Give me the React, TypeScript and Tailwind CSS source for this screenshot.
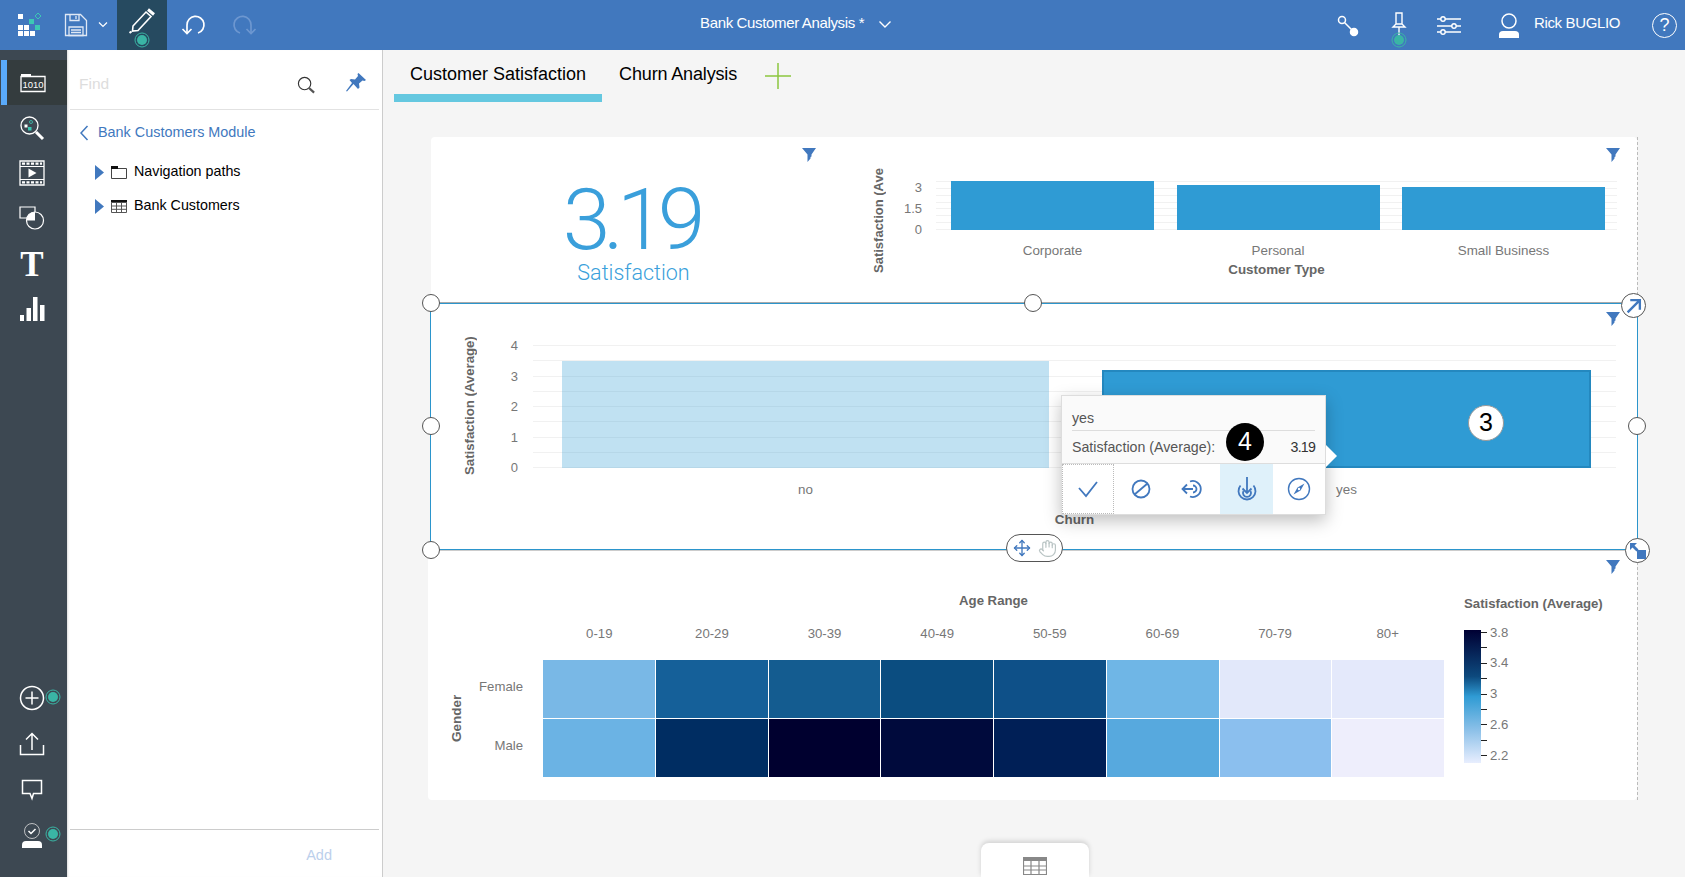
import { Move, Hand } from "lucide-react";

const font = "font-['Liberation_Sans','Arial',sans-serif]";

const female = ["bg-[#79b8e6]", "bg-[#156099]", "bg-[#145c90]", "bg-[#0b4d80]", "bg-[#0e5088]", "bg-[#6fb6e6]", "bg-[#e2e8fa]", "bg-[#e4e9fb]"];
const male = ["bg-[#6bb3e4]", "bg-[#002d62]", "bg-[#00002f]", "bg-[#000a3c]", "bg-[#001f56]", "bg-[#57a9de]", "bg-[#8bbfee]", "bg-[#eeeefc]"];
const ages = ["0-19", "20-29", "30-39", "40-49", "50-59", "60-69", "70-79", "80+"];
const legend = ["3.8", "", "3.4", "", "3", "", "2.6", "", "2.2"];

function Dot({ size = 16 }: { size?: number }) {
  return (
    <svg width={size} height={size} viewBox="0 0 16 16">
      <circle cx="8" cy="8" r="7" fill="none" stroke="#3ab5a5" strokeWidth="1" />
      <circle cx="8" cy="8" r="5" fill="#3ab5a5" />
    </svg>
  );
}

function FilterIcon() {
  return (
    <svg width="14" height="15" viewBox="0 0 14 15">
      <path d="M0 1h14L9.500 7.500v2l-1 .5v1.500L5.500 15V7.500z" fill="#4178be" />
    </svg>
  );
}

function Gridlines({ count }: { count: number }) {
  return (
    <div className="absolute inset-0 flex flex-col justify-between">
      {Array.from({ length: count }).map((_, i) => (
        <div key={i} className="h-px bg-[#f1f1f1]" />
      ))}
    </div>
  );
}

function Handle({ className }: { className: string }) {
  return <div className={`absolute h-[18px] w-[18px] rounded-full border border-[#555] bg-white ${className}`} />;
}

function SideItem({ children, active = false }: { children: React.ReactNode; active?: boolean }) {
  return (
    <div className={`relative flex h-[45px] items-center justify-center pr-[3px] ${active ? "ml-px bg-[#343c3e]" : ""}`}>
      {active && <div className="absolute inset-y-0 left-0 w-[6px] bg-[#5aaafa]" />}
      {children}
    </div>
  );
}

function TopBar() {
  return (
    <div className="flex h-[50px] shrink-0 items-center bg-[#4178be] text-white">
      <svg className="ml-[16px]" width="26" height="26" viewBox="0 0 26 26">
        <path d="M2 2h5v5H2zM2 13h5v5H2zM8 13h5v5H8zM2 19h5v5H2zM8 19h5v5H8zM14 19h5v5h-5z" fill="#fff" />
        <path d="M13 7h5v5h-5zM19 13h5v5h-5z" fill="#3cc8b4" />
        <path d="M22 1l3 3-3 3-3-3z" fill="none" stroke="#3cc8b4" />
      </svg>
      <svg className="ml-[22px]" width="24" height="24" viewBox="0 0 24 24" fill="none" stroke="#dfe8f5" strokeWidth="1.3">
        <path d="M1.500 1.500h15l6 6v15h-21z" />
        <path d="M6 1.500v6h9v-6M12 3v3" />
        <path d="M5 14h14v8.500H5zM7 17h10M7 19.500h10" />
      </svg>
      <svg className="ml-[9px]" width="12" height="8" viewBox="0 0 12 8" fill="none" stroke="#fff" strokeWidth="1.2">
        <path d="M2 1.500l4 4 4-4" />
      </svg>
      <div className="relative ml-[8px] flex h-[50px] w-[50px] items-center justify-center bg-[#264a60]">
        <svg width="26" height="28" viewBox="0 0 26 28" fill="none" stroke="#fff" strokeWidth="1.6" className="-mt-[8px]">
          <path d="M4 19L17 5l5 4.500L9 23.500l-5.500 .5z" />
          <path d="M19 2.500l6 5" strokeWidth="3" />
          <path d="M0.500 26l2-1.500" strokeWidth="2" />
        </svg>
        <div className="absolute left-[17px] top-[32px]">
          <Dot />
        </div>
      </div>
      <svg className="ml-[14px]" width="26" height="26" viewBox="0 0 26 26" fill="none" stroke="#fff" strokeWidth="1.7">
        <path d="M6 21V13A8.500 8.500 0 1 1 17 21" />
        <path d="M1.500 17L6 21.500 10.500 17" />
      </svg>
      <svg className="ml-[24px]" width="26" height="26" viewBox="0 0 26 26" fill="none" stroke="#6d97d0" strokeWidth="1.7">
        <path d="M20 21V13A8.500 8.500 0 1 0 9 21" />
        <path d="M24.500 17L20 21.500 15.500 17" />
      </svg>
      <div className="-mt-[3px] ml-[443px] w-[170px] text-[15px] tracking-[-0.35px]">Bank Customer Analysis *</div>
      <svg className="-mt-[2px] ml-[8px]" width="14" height="9" viewBox="0 0 14 9" fill="none" stroke="#fff" strokeWidth="1.4">
        <path d="M1.500 1.500L7 7l5.500-5.500" />
      </svg>
      <svg className="ml-[444px]" width="24" height="24" viewBox="0 0 24 24" fill="none" stroke="#fff" strokeWidth="1.5">
        <circle cx="6" cy="7" r="3.500" />
        <path d="M8.500 9.500l7 7" />
        <circle cx="18" cy="19" r="3.500" fill="#fff" />
      </svg>
      <div className="relative ml-[27px] h-[50px] w-[24px]">
        <svg className="absolute left-0 top-[10px]" width="24" height="26" viewBox="0 0 24 26" fill="none" stroke="#fff" strokeWidth="1.4">
          <path d="M9 3h6v11H9zM9 14l-3 3h12l-3-3M12 17v9" />
        </svg>
        <div className="absolute left-[4px] top-[32px]">
          <Dot />
        </div>
      </div>
      <svg className="ml-[25px]" width="26" height="22" viewBox="0 0 26 22" fill="none" stroke="#fff" strokeWidth="1.4">
        <path d="M1 5h24M1 12h24M1 18h24" />
        <circle cx="7" cy="5" r="2.200" fill="#4178be" />
        <circle cx="18" cy="12" r="2.200" fill="#4178be" />
        <circle cx="7" cy="18" r="2.200" fill="#4178be" />
      </svg>
      <svg className="ml-[35px]" width="24" height="26" viewBox="0 0 24 26" fill="none">
        <circle cx="12" cy="9" r="7" stroke="#fff" strokeWidth="1.500" />
        <path d="M2 26v-3.500Q2 19 6 19h12q4 0 4 3.500V26z" fill="#fff" />
      </svg>
      <div className="-mt-[3px] ml-[13px] w-[86px] whitespace-nowrap text-[15px] tracking-[-0.35px]">Rick BUGLIO</div>
      <div className="ml-[32px] flex h-[25px] w-[25px] items-center justify-center rounded-full border-[1.5px] border-white text-[18px]">?</div>
    </div>
  );
}

function Sidebar() {
  return (
    <div className="flex w-[67px] shrink-0 flex-col justify-between bg-[#3d4852] pb-[20px] pt-[10px]">
      <div>
        <SideItem active>
          <svg className="ml-[1px]" width="26" height="20" viewBox="0 0 26 20" fill="none">
            <path d="M1 1h10v3H1z" fill="#fff" />
            <path d="M1 3.500h24v15H1z" stroke="#fff" strokeWidth="1.300" />
            <text x="13" y="15" textAnchor="middle" fontSize="9.500" fill="#fff" fontFamily="Liberation Sans">1010</text>
          </svg>
        </SideItem>
        <SideItem>
          <svg width="26" height="26" viewBox="0 0 26 26" fill="none" stroke="#fff">
            <circle cx="10.500" cy="10.500" r="8.500" strokeWidth="1.300" />
            <path d="M17 17l7 7" strokeWidth="3" />
            <path d="M5.500 9.500h3v3h-3z" fill="#fff" stroke="none" />
            <path d="M9 12h3.500v3.500H9z" fill="#3cc8b4" stroke="none" />
            <circle cx="12" cy="7" r="1.500" stroke="#3cc8b4" strokeWidth="0.800" />
          </svg>
        </SideItem>
        <SideItem>
          <svg width="26" height="26" viewBox="0 0 26 26" fill="none" stroke="#fff">
            <path d="M1 1h24v24H1z" strokeWidth="1.300" />
            <path d="M1 6.500h24M1 19.500h24" strokeWidth="1" />
            <path d="M3 3.700h20M3 22.300h20" strokeWidth="2.200" strokeDasharray="3 1.500" />
            <path d="M9.500 8.500v9l8-4.500z" fill="#fff" stroke="none" />
          </svg>
        </SideItem>
        <SideItem>
          <svg width="26" height="26" viewBox="0 0 26 26" fill="none" stroke="#fff" strokeWidth="1.200">
            <path d="M1 2h15v11H1z" />
            <circle cx="16" cy="15.500" r="8.500" fill="#3d4852" />
            <path d="M16 7a8.500 8.500 0 0 0-8.500 8.500H16z" fill="#fff" stroke="none" />
          </svg>
        </SideItem>
        <SideItem>
          <span className="pt-[3px] font-['Liberation_Serif',serif] text-[35px] font-bold leading-none text-white">T</span>
        </SideItem>
        <SideItem>
          <svg className="mt-[3px]" width="26" height="26" viewBox="0 0 26 26" fill="#fff">
            <path d="M1 19h4v6H1zM7.500 12H12v13H7.500zM14 1h4.500v24H14zM21 9h4.500v16H21z" />
          </svg>
        </SideItem>
      </div>
      <div>
        <SideItem>
          <svg className="-mt-[3px]" width="26" height="26" viewBox="0 0 26 26" fill="none" stroke="#fff" strokeWidth="1.500">
            <circle cx="13" cy="13" r="11.500" />
            <path d="M6.500 13h13M13 6.500v13" />
          </svg>
          <div className="absolute left-[45px] top-[12px]">
            <Dot />
          </div>
        </SideItem>
        <SideItem>
          <svg className="-mt-[1px]" width="26" height="26" viewBox="0 0 26 26" fill="none" stroke="#fff" strokeWidth="1.500">
            <path d="M1.500 14v9.500h23V14" />
            <path d="M13 19V2.500M7 8.500l6-6 6 6" />
          </svg>
        </SideItem>
        <SideItem>
          <svg className="mt-[1px]" width="22" height="22" viewBox="0 0 22 22" fill="none" stroke="#fff" strokeWidth="1.500">
            <path d="M1.500 1.500h19v13h-8l-1.500 5-2-5h-7.500z" />
          </svg>
        </SideItem>
        <SideItem>
          <svg width="22" height="26" viewBox="0 0 22 26" fill="none">
            <circle cx="11" cy="9" r="7.500" stroke="#ddd" strokeWidth="0.800" />
            <path d="M7.500 9l2.500 2.500 4.500-4.500" stroke="#fff" strokeWidth="1.500" />
            <path d="M1 26v-3Q1 19 5 19h12q4 0 4 4v3z" fill="#fff" />
          </svg>
          <div className="absolute left-[45px] top-[14px]">
            <Dot />
          </div>
        </SideItem>
      </div>
    </div>
  );
}

function Panel() {
  return (
    <div className="flex w-[316px] shrink-0 flex-col border-r border-[#ccc] bg-white shadow-[inset_2px_0_2px_-1px_#ddd]">
      <div className="mx-[3px] flex h-[60px] items-center border-b border-[#e2e2e2] pt-[8px]">
        <span className="ml-[9px] text-[15.500px] text-[#ddd]">Find</span>
        <svg className="ml-[188px] mt-[3px]" width="19" height="19" viewBox="0 0 20 20" fill="none" stroke="#333">
          <circle cx="8" cy="8" r="6.500" strokeWidth="1.200" />
          <path d="M12.500 12.500l5.500 5" strokeWidth="2.200" stroke="#555" />
        </svg>
        <svg className="ml-[30px] -mt-[1px]" width="20" height="20" viewBox="0 0 20 20" fill="#4178be">
          <path d="M12.500 0L20 7l-1.500 1-2-.5-3.500 3 .5 4L12 16 7.500 11 1 18.500l-1-.5L6 10 3.500 7 5 6l4 .5 3-3.500-.5-2z" />
        </svg>
      </div>
      <div className="flex h-[44px] items-center pl-[13px] pt-[2px] text-[14.400px] text-[#4178be]">
        <svg className="mr-[9px]" width="9" height="16" viewBox="0 0 9 16" fill="none" stroke="#4178be" strokeWidth="1.500">
          <path d="M7.500 1L1 8l6.500 7" />
        </svg>
        Bank Customers Module
      </div>
      <div className="mt-px flex h-[34px] items-center pl-[28px] text-[14.300px] text-black">
        <svg width="9" height="15" viewBox="0 0 9 15"><path d="M0 0l9 7.500L0 15z" fill="#4178be" /></svg>
        <svg className="ml-[7px]" width="16" height="13" viewBox="0 0 16 13" fill="none" stroke="#444">
          <path d="M.5 2.500h15v10H.5z" />
          <path d="M0 0h7v3H0z" fill="#111" stroke="none" />
        </svg>
        <span className="ml-[7px]">Navigation paths</span>
      </div>
      <div className="flex h-[34px] items-center pl-[28px] text-[14.300px] text-black">
        <svg width="9" height="15" viewBox="0 0 9 15"><path d="M0 0l9 7.500L0 15z" fill="#4178be" /></svg>
        <svg className="ml-[7px]" width="16" height="13" viewBox="0 0 16 13" fill="none" stroke="#555">
          <path d="M0 0h16v2.500H0z" fill="#111" stroke="none" />
          <path d="M.5 2.500h15v10H.5zM.5 6h15M.5 9.300h15M5.500 2.500v10M10.500 2.500v10" />
        </svg>
        <span className="ml-[7px]">Bank Customers</span>
      </div>
      <div className="flex-1" />
      <div className="mx-[3px] flex h-[48px] items-center justify-end border-t border-[#ccc] pr-[47px] pt-[4px] text-[14.500px] text-[#bcd0ec]">Add</div>
    </div>
  );
}

function Kpi() {
  return (
    <div className="relative flex w-[407px] shrink-0 flex-col items-center pt-[40px]">
      <div className="pr-[8px] font-['Roboto',sans-serif] text-[86px] font-light leading-[86px] tracking-[-7px] text-[#3a9fdb]">3.19</div>
      <div className="-mt-px pr-[2px] font-['Roboto',sans-serif] text-[21.500px] font-light leading-[22px] text-[#3a9fdb]">Satisfaction</div>
      <div className="absolute right-[22px] top-[10px]">
        <FilterIcon />
      </div>
    </div>
  );
}

function CustomerTypeChart() {
  return (
    <div className="ml-[33px] flex pt-[31px]">
      <div className="-mt-[4px] h-[109px] w-[16px] rotate-180 overflow-hidden whitespace-nowrap text-[13px] font-bold leading-[16px] text-[#666] [writing-mode:vertical-rl]">Satisfaction (Ave</div>
      <div className="mt-[13px] flex h-[56px] w-[35px] flex-col justify-between text-right text-[13px] leading-[14px] text-[#777]">
        <span>3</span>
        <span>1.5</span>
        <span>0</span>
      </div>
      <div className="ml-[14px] mt-[13px] w-[681px]">
        <div className="relative h-[49px]">
          <Gridlines count={8} />
          <div className="absolute inset-0 flex items-end gap-[22.500px] pl-[15px]">
            <div className="h-[49px] w-[203px] bg-[#2f9bd4]" />
            <div className="h-[45px] w-[203px] bg-[#2f9bd4]" />
            <div className="h-[43px] w-[203px] bg-[#2f9bd4]" />
          </div>
        </div>
        <div className="mt-[14px] flex gap-[22.500px] pl-[15px] text-center text-[13.400px] leading-[14px] text-[#777]">
          <span className="w-[203px]">Corporate</span>
          <span className="w-[203px]">Personal</span>
          <span className="w-[203px]">Small Business</span>
        </div>
        <div className="mt-[5px] text-center text-[13.400px] font-bold leading-[14px] text-[#666]">Customer Type</div>
      </div>
      <div className="absolute left-[1175px] top-[10px]">
        <FilterIcon />
      </div>
    </div>
  );
}

function Popup() {
  return (
    <div className="absolute left-[630px] top-[91px] h-[120px] w-[265px] border border-[#ddd] bg-[#fafafa] shadow-[0_6px_16px_rgba(0,0,0,0.25)]">
      <div className="mx-[10px] flex h-[35px] items-center border-b border-[#ddd] pt-[12px] text-[14.200px] text-[#555]">yes</div>
      <div className="flex h-[33px] items-center justify-between border-b border-[#ddd] px-[10px] pt-[2px] text-[14.200px] text-[#555]">
        <span>Satisfaction (Average):</span>
        <span className="tracking-[-0.8px] text-[#333]">3.19</span>
      </div>
      <div className="flex h-[50px] bg-white">
        <div className="flex w-[52px] items-center justify-center border border-dotted border-[#bbb]">
          <svg width="22" height="18" viewBox="0 0 22 18" fill="none" stroke="#4178be" strokeWidth="1.800">
            <path d="M2 8l7 8L20 2" />
          </svg>
        </div>
        <div className="flex w-[53px] items-center justify-center">
          <svg width="22" height="22" viewBox="0 0 22 22" fill="none" stroke="#4178be" strokeWidth="1.800">
            <circle cx="11" cy="11" r="8.500" />
            <path d="M4.500 16.500l13-11" />
          </svg>
        </div>
        <div className="flex w-[53px] items-center justify-center">
          <svg width="26" height="22" viewBox="0 0 26 22" fill="none" stroke="#4178be" strokeWidth="1.800">
            <path d="M9 3.500a8 8 0 1 1 0 15" />
            <path d="M12 7.500a3.500 3.500 0 1 1 0 7" />
            <path d="M1 11h11M6 6.500L1.500 11 6 15.500" />
          </svg>
        </div>
        <div className="flex w-[53px] items-center justify-center bg-[#dff1fa]">
          <svg width="22" height="26" viewBox="0 0 22 26" fill="none" stroke="#4178be" strokeWidth="1.800">
            <path d="M4.500 9.500a8.500 8.500 0 1 0 13 0" />
            <path d="M7.500 15a4 4 0 1 0 7 0" />
            <path d="M11 1v16M6.500 12.500L11 17l4.500-4.500" />
          </svg>
        </div>
        <div className="flex flex-1 items-center justify-center">
          <svg width="24" height="24" viewBox="0 0 24 24" fill="none" stroke="#4178be" strokeWidth="1.400">
            <circle cx="12" cy="12" r="10.500" />
            <path d="M17.500 6.500l-7 4-4 7 7-4z" fill="#4178be" stroke="none" />
            <circle cx="12" cy="12" r="1.200" fill="#fff" stroke="none" />
          </svg>
        </div>
      </div>
      <div className="absolute left-[264px] top-[49px] h-0 w-0 border-y-[11px] border-l-[11px] border-y-transparent border-l-white" />
      <div className="absolute left-[164px] top-[27px] flex h-[38px] w-[38px] items-center justify-center rounded-full bg-black text-[25px] text-white">4</div>
    </div>
  );
}

function ChurnChart() {
  return (
    <div className="relative z-10 -mr-px ml-[2px] h-[247px] border border-[#2b95cc] bg-white p-px shadow-[0_-1px_0_#aaa,0_1px_0_#ccc]">
      <div className="flex pt-[31px]">
        <div className="-mt-[3px] ml-[31px] h-[145px] w-[14px] rotate-180 whitespace-nowrap text-center text-[13.200px] font-bold leading-[14px] text-[#666] [writing-mode:vertical-rl]">Satisfaction (Average)</div>
        <div className="mt-[3px] flex h-[136px] w-[41px] flex-col justify-between text-right text-[13px] leading-[14px] text-[#777]">
          <span>4</span>
          <span>3</span>
          <span>2</span>
          <span>1</span>
          <span>0</span>
        </div>
        <div className="ml-[15px] mt-[9px] w-[1083px]">
          <div className="relative h-[123px]">
            <Gridlines count={9} />
            <div className="absolute inset-0 flex items-end gap-[53px] pl-[29px]">
              <div className="h-[107px] w-[487px] bg-[#2f9bd4]/30" />
              <div className="h-[98px] w-[489px] border-2 border-[#2488bf] bg-[#2f9bd4]" />
            </div>
          </div>
          <div className="mt-[15px] flex gap-[53px] pl-[29px] text-center text-[13.400px] leading-[14px] text-[#777]">
            <span className="w-[487px]">no</span>
            <span className="w-[489px]">yes</span>
          </div>
          <div className="mt-[16px] text-center text-[13.400px] font-bold leading-[14px] text-[#666]">Churn</div>
        </div>
      </div>

      <div className="absolute left-[1037px] top-[101px] flex h-[36px] w-[36px] items-center justify-center rounded-full border border-[#999] bg-white text-[25px] text-black">3</div>
      <Popup />

      <div className="absolute left-[1175px] top-[7px]">
        <FilterIcon />
      </div>
      <Handle className="left-[-9px] top-[-10px]" />
      <Handle className="left-[593px] top-[-10px]" />
      <Handle className="left-[-9px] top-[113px]" />
      <Handle className="left-[1197px] top-[113px]" />
      <Handle className="left-[-9px] top-[237px]" />

      <div className="absolute left-[1190px] top-[-11px] flex h-[25px] w-[25px] items-center justify-center rounded-full border border-[#555] bg-white">
        <svg width="16" height="16" viewBox="0 0 15 15" fill="none" stroke="#4178be" strokeWidth="2.200">
          <path d="M1.500 13.500l11-11M4 2h9v9" />
        </svg>
      </div>
      <div className="absolute left-[1194px] top-[234px] flex h-[25px] w-[25px] items-center justify-center rounded-full border border-[#555] bg-white">
        <svg width="17" height="17" viewBox="0 0 17 17" fill="#4178be">
          <path d="M8 8h9v9H8z" />
          <path d="M1 1h7L5.500 3.500l4 4-2 2-4-4L1 8z" />
        </svg>
      </div>
      <div className="absolute left-[575px] top-[230px] flex h-[28px] w-[57px] items-center justify-center gap-[7px] rounded-[14px] border border-[#555] bg-white">
        <Move size={18} className="text-[#4178be]" strokeWidth={1.8} />
        <Hand size={19} className="text-[#b9c4c4]" strokeWidth={1.5} />
      </div>
    </div>
  );
}

function Heatmap() {
  return (
    <div className="relative flex h-[250px] rounded-b-[4px] bg-white">
      <div className="flex w-[115px] shrink-0 items-start pl-[22px] pt-[110px]">
        <div className="-mt-[3px] h-[122px] w-[14px] rotate-180 text-center text-[13.500px] font-bold leading-[14px] text-[#666] [writing-mode:vertical-rl]">Gender</div>
        <div className="-mt-[3px] flex h-[118px] flex-1 flex-col pr-[20px] text-right text-[13.200px] text-[#777]">
          <div className="flex h-[59px] items-center justify-end">Female</div>
          <div className="flex h-[59px] items-center justify-end">Male</div>
        </div>
      </div>
      <div className="w-[901px] shrink-0 pt-[43px]">
        <div className="text-center text-[13.200px] font-bold leading-[16px] text-[#666]">Age Range</div>
        <div className="mt-[18px] grid grid-cols-8 text-center text-[13.200px] leading-[14px] text-[#777]">
          {ages.map((a) => (
            <span key={a}>{a}</span>
          ))}
        </div>
        <div className="mt-[19px] grid h-[117px] grid-cols-8 grid-rows-2 gap-px">
          {female.map((c, i) => (
            <div key={"f" + i} className={c} />
          ))}
          {male.map((c, i) => (
            <div key={"m" + i} className={c} />
          ))}
        </div>
      </div>
      <div className="ml-[20px] pt-[46px]">
        <div className="whitespace-nowrap text-[13.200px] font-bold leading-[16px] text-[#666]">Satisfaction (Average)</div>
        <div className="mt-[18px] flex">
          <div className="h-[133px] w-[17px] bg-[linear-gradient(to_bottom,#000033,#0d4a7e_35%,#2f9bd4_50%,#8bc0e8_75%,#e8eefe)]" />
          <div className="mt-[2px] flex h-[124px] flex-col justify-between text-[13.200px] text-[#777]">
            {legend.map((l, i) => (
              <div key={i} className="flex h-px items-center">
                <div className="h-px w-[6px] bg-[#222]" />
                {l && <span className="ml-[3px]">{l}</span>}
              </div>
            ))}
          </div>
        </div>
      </div>
      <div className="absolute left-[1178px] top-[9px]">
        <FilterIcon />
      </div>
    </div>
  );
}

export default function App() {
  return (
    <div className={`flex h-screen w-full flex-col overflow-hidden ${font}`}>
      <TopBar />
      <div className="flex min-h-0 flex-1">
        <Sidebar />
        <Panel />
        <div className="relative flex-1 bg-[#f5f5f5]">
          <div className="ml-[11px] flex text-[18px] text-black">
            <div className="flex h-[52px] items-center border-b-[8px] border-[#65c8e0] px-[16px] pt-[4px]">Customer Satisfaction</div>
            <div className="ml-[17px] flex h-[52px] items-center pb-[8px] pt-[4px] tracking-[-0.15px]">Churn Analysis</div>
            <svg className="ml-[28px] mt-[13px]" width="26" height="26" viewBox="0 0 26 26" stroke="#8cc63f" strokeWidth="1.500">
              <path d="M13 0v26M0 13h26" />
            </svg>
          </div>
          <div className="relative ml-[45px] mt-[35px] w-[1210px] border-r border-dashed border-[#bbb]">
            <div className="relative ml-[3px] flex h-[166px] rounded-t-[4px] bg-white">
              <Kpi />
              <CustomerTypeChart />
            </div>
            <ChurnChart />
            <Heatmap />
          </div>
          <div className="absolute bottom-0 left-[598px] flex h-[34px] w-[108px] items-end justify-center rounded-t-[8px] bg-white pb-[2px] shadow-[0_-2px_5px_rgba(0,0,0,0.15)]">
            <svg width="24" height="18" viewBox="0 0 24 18" fill="none" stroke="#888" strokeWidth="1.200">
              <path d="M.5 .5h23v17H.5z" />
              <path d="M0 0h24v4H0z" fill="#888" stroke="none" />
              <path d="M.5 9h23M.5 13h23M8 4v14M16 4v14" />
            </svg>
          </div>
        </div>
      </div>
    </div>
  );
}
